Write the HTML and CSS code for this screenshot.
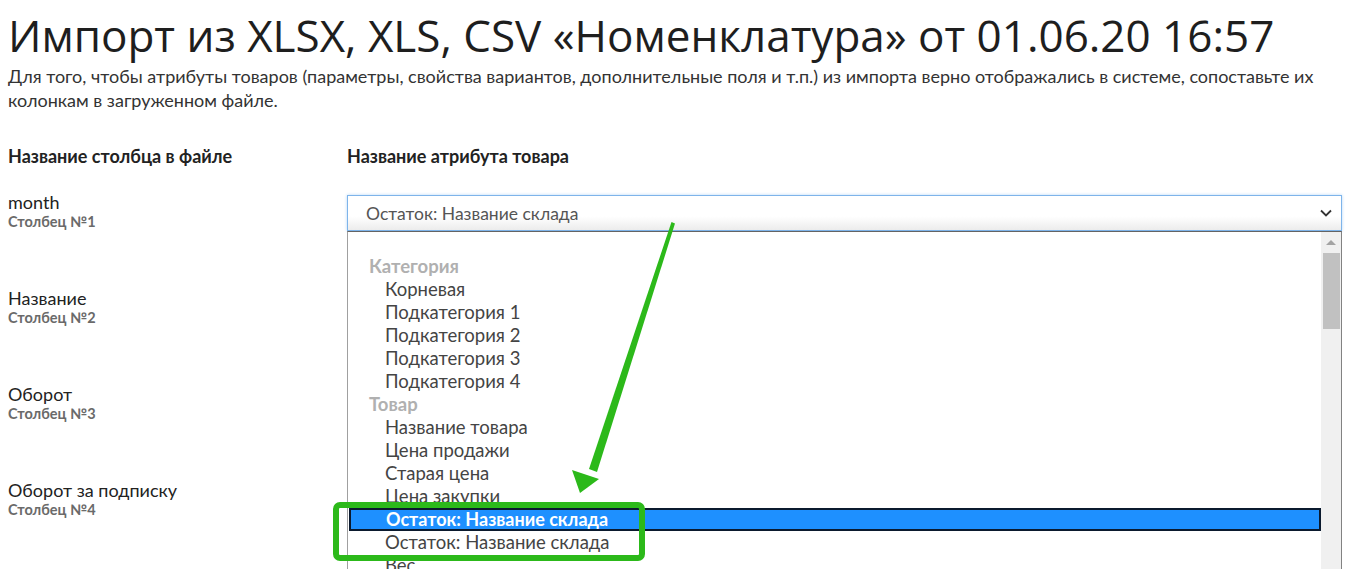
FILE: index.html
```html
<!DOCTYPE html>
<html lang="ru">

<head>
  <meta charset="UTF-8">
  <meta name="viewport" content="width=device-width, initial-scale=1.0">
  <title>Импорт из XLSX, XLS, CSV</title>
  <link rel="stylesheet" href="styles.css">
</head>

<body>
  <div class="page">
    <h1>Импорт из XLSX, XLS, CSV «Номенклатура» от 01.06.20 16:57</h1>
    <p class="hint">Для того, чтобы атрибуты товаров (параметры, свойства вариантов, дополнительные поля и т.п.) из импорта верно отображались в системе, сопоставьте их колонкам в загруженном файле.</p>

    <div class="map">
      <div class="map-head">Название столбца в файле</div>
      <div class="map-head">Название атрибута товара</div>

      <div class="col-name">
        <div class="col-title">month</div>
        <div class="col-num">Столбец №1</div>
      </div>
      <div class="col-attr">
        <div class="select open">
          <span>Остаток: Название склада</span>
          <svg class="chevron" width="12" height="8" viewBox="0 0 12 8"><path d="M1 1.5l5 5 5-5" fill="none" stroke="#333" stroke-width="1.8"/></svg>
        </div>

        <!-- open list of the first select -->
        <div class="listbox">
          <div class="list">
            <div class="opt empty">&nbsp;</div>
            <div class="group">Категория</div>
            <div class="opt">Корневая</div>
            <div class="opt">Подкатегория 1</div>
            <div class="opt">Подкатегория 2</div>
            <div class="opt">Подкатегория 3</div>
            <div class="opt">Подкатегория 4</div>
            <div class="group">Товар</div>
            <div class="opt">Название товара</div>
            <div class="opt">Цена продажи</div>
            <div class="opt">Старая цена</div>
            <div class="opt">Цена закупки</div>
            <div class="opt selected">Остаток: Название склада</div>
            <div class="opt">Остаток: Название склада</div>
            <div class="opt">Вес</div>
            <div class="opt">Артикул</div>
          </div>
          <div class="scrollbar">
            <div class="scroll-up"></div>
            <div class="scroll-thumb"></div>
          </div>
        </div>
      </div>

      <div class="col-name">
        <div class="col-title">Название</div>
        <div class="col-num">Столбец №2</div>
      </div>
      <div class="col-attr">
        <div class="select"><span>Название товара</span></div>
      </div>

      <div class="col-name">
        <div class="col-title">Оборот</div>
        <div class="col-num">Столбец №3</div>
      </div>
      <div class="col-attr">
        <div class="select"><span>Не импортировать</span></div>
      </div>

      <div class="col-name">
        <div class="col-title">Оборот за подписку</div>
        <div class="col-num">Столбец №4</div>
      </div>
      <div class="col-attr">
        <div class="select"><span>Не импортировать</span></div>
      </div>
    </div>
  </div>

  <!-- green marks: arrow to the option and a frame round the two items -->
  <svg class="marks" width="1347" height="569" viewBox="0 0 1347 569">
    <polygon points="671.5,222 675,223.5 597,472 589,469" fill="#2cb91a"/>
    <polygon points="572,470 599,479 580,493" fill="#2cb91a"/>
    <rect x="336" y="505" width="306" height="53" rx="4" fill="none" stroke="#2cb91a" stroke-width="6"/>
  </svg>
</body>

</html>
```

FILE: styles.css
```css
html {
  overflow: hidden;
}

body {
  margin: 0;
  font-family: Lato, "Open Sans", Arial, sans-serif;
  color: #222;
  background: #fff;
}

.page {
  padding: 0 5px 0 8px;
}

h1 {
  font-family: "Open Sans", Arial, sans-serif;
  font-weight: 400;
  font-size: 44px;
  line-height: 52px;
  margin: 9px 0 0;
  color: #1e1e1e;
}

.hint {
  font-size: 18px;
  line-height: 24px;
  margin: 3px 0 0;
  color: #333;
}

.map {
  display: grid;
  grid-template-columns: 339px 1fr;
  grid-template-rows: 47px;
  grid-auto-rows: 96px;
  margin-top: 34px;
}

.map .map-head {
  font-weight: 700;
  font-size: 18px;
  line-height: 20px;
  color: #222;
}

.col-title {
  font-size: 18px;
  line-height: 19px;
}

.col-num {
  font-size: 14.5px;
  font-weight: 700;
  color: #6a6a6a;
  line-height: 20px;
}

.col-attr {
  position: relative;
}

.select {
  height: 34px;
  margin-top: 2px;
  border: 1px solid #abadb3;
  background: linear-gradient(#fff, #fff 60%, #ececec);
  display: flex;
  align-items: center;
  justify-content: space-between;
  padding: 0 9px 0 18px;
  font-size: 17.5px;
  color: #555;
}

.select.open {
  border-color: #7eb4ea;
  box-shadow: 0 0 3px #b5d7f7;
}

.listbox {
  position: absolute;
  top: 38px;
  left: 0;
  right: 0;
  height: 420px;
  background: #fff;
  border-top: 1px solid #646464;
  border-left: 1px solid #a0a0a0;
  border-right: 1px solid #828282;
  display: flex;
  z-index: 2;
}

.list {
  flex: 1;
  font-size: 18.5px;
  color: #444;
}

.opt,
.group {
  height: 23px;
  line-height: 23px;
  white-space: nowrap;
}

.group {
  padding-left: 21px;
  font-weight: 700;
  color: #b0b0b0;
}

.opt {
  padding-left: 37px;
}

.opt.selected {
  background: #1e90ff;
  color: #fff;
  font-weight: 700;
  font-size: 18px;
  border: 2px solid #0b1a2e;
  height: 19px;
  line-height: 19px;
  padding-left: 35px;
  margin-left: 1px;
}

.scrollbar {
  width: 20px;
  background: #f0f0f0;
}

.scroll-up {
  width: 0;
  height: 0;
  margin: 8px auto 0;
  border-left: 5px solid transparent;
  border-right: 5px solid transparent;
  border-bottom: 5px solid #a3a3a3;
}

.scroll-thumb {
  margin: 8px 1px 0 2px;
  height: 76px;
  background: #c1c1c1;
}

.marks {
  position: absolute;
  left: 0;
  top: 0;
  z-index: 5;
  pointer-events: none;
}
```
